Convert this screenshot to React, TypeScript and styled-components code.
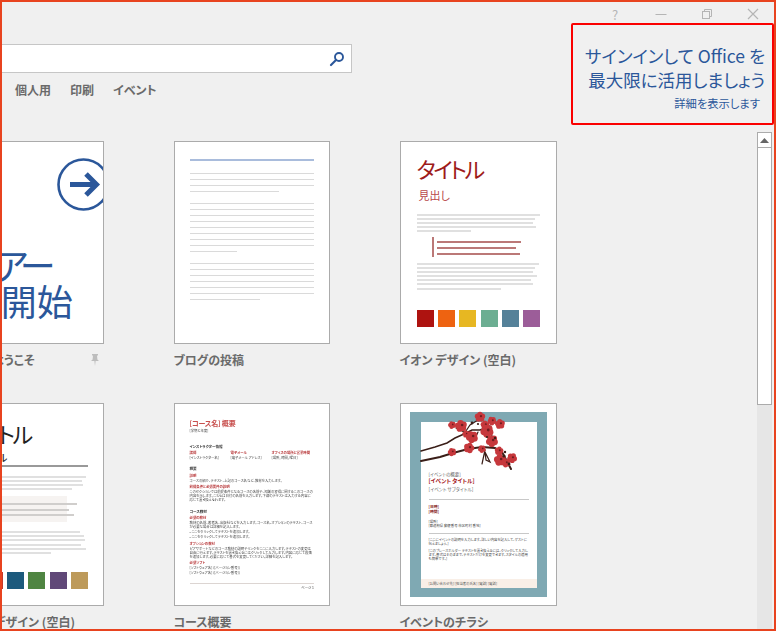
import styled, { createGlobalStyle } from "styled-components";

const UI_FONT = `"Noto Sans CJK JP", "Noto Sans", sans-serif`;
const BLUE = "#2b579a";

const GlobalStyle = createGlobalStyle`
  html, body {
    margin: 0;
    padding: 0;
    background: #f0f0f0;
    overflow: hidden;
  }
  * {
    box-sizing: border-box;
  }
`;

const body1 = [123, 118, 116, 119, 54];
const body2 = [122, 118, 116, 120, 114, 116, 84];
const quote = [84, 79, 83];
const facetTop = [121, 117, 118, 107];
const facetQuote = [90, 82, 87];
const facetBottom = [115, 119, 120, 116, 121, 86];
const ionColors = ["#ae1310", "#ee6311", "#e7b722", "#6cae92", "#558199", "#9c5d99"];
const facetColors = ["#8e2a2a", "#c5392a", "#1c5a7d", "#4f8542", "#604878", "#bd9a5a"];

function Lines({ widths, color, thick, gap }: { widths: number[]; color: string; thick: number; gap: number }) {
  return (
    <LineBlock $gap={gap}>
      {widths.map((w, i) => (
        <TextBar key={i} $w={w} $h={thick} $c={color} />
      ))}
    </LineBlock>
  );
}

function Swatches({ colors }: { colors: string[] }) {
  return (
    <SwatchRow>
      {colors.map((c) => (
        <Swatch key={c} $c={c} />
      ))}
    </SwatchRow>
  );
}

// each blossom is a ring of small petals round a dark centre
function Flower({ x, y, r }: { x: number; y: number; r: number }) {
  const petals = [0, 1, 2, 3, 4];
  return (
    <g>
      {petals.map((i) => {
        const a = (i * 2 * Math.PI) / 5 + x;
        return (
          <circle key={i} cx={x + Math.cos(a) * r * 0.65} cy={y + Math.sin(a) * r * 0.65} r={r * 0.68} fill="#c6383c" />
        );
      })}
      <circle cx={x + r * 0.25} cy={y - r * 0.2} r={r * 0.28} fill="#6d1d20" />
    </g>
  );
}

function Blossoms() {
  const flowers: [number, number, number][] = [
    [32, 15, 3], [41, 16, 4.6], [46, 24, 2.8], [52, 27, 4.6], [60, 7, 4], [65, 15, 3.4], [67, 21, 5], [72, 11, 3.4],
    [80, 14, 3.8], [72, 31, 4.6], [32, 42, 3.2], [49, 38, 4], [62, 39, 3], [79, 41, 3.4], [80, 50, 4.6],
    [92, 48, 3.8], [86, 53, 3.4],
  ];
  return (
    <BlossomArt viewBox="0 0 110 66" width="110" height="66">
      <g fill="none" stroke="#3a1e18" strokeLinecap="round">
        <path d="M1 41 L15 37 L27 33 L35 28 L44 24 L52 20 L60 20 L70 16" strokeWidth="1.5" />
        <path d="M44 24 L50 15 L58 10 M36 18 L44 22 M72 26 L70 20 M54 31 L58 22" strokeWidth="1.2" />
        <path d="M1 51 L20 47 L33 43 L48 39 L62 37 L75 38 L82 42 L91 59" strokeWidth="2" />
        <path d="M65 40 L62 54 M65 42 L70 52 L66 50 L65 42" strokeWidth="1.2" />
      </g>
      {flowers.map(([x, y, r]) => (
        <Flower key={`${x}-${y}`} x={x} y={y} r={r} />
      ))}
      <g fill="#3a1e18">
        <circle cx="52" cy="13" r="1.4" />
        <circle cx="58" cy="14" r="1.1" />
        <circle cx="75" cy="28" r="1.2" />
        <circle cx="84" cy="46" r="1.6" />
        <circle cx="89" cy="54" r="1.4" />
        <circle cx="67" cy="27" r="1.1" />
        <circle cx="85" cy="42" r="1.2" />
      </g>
    </BlossomArt>
  );
}

export default function App() {
  return (
    <>
      <GlobalStyle />
      <Page>
        <Header>
          <WindowControls>
            <ControlButton>
              <HelpGlyph>?</HelpGlyph>
            </ControlButton>
            <ControlButton>
              <svg width="12" height="12" viewBox="0 0 12 12">
                <path d="M0.5 6.5 H11.5" stroke="#b5b5b5" strokeWidth="1" />
              </svg>
            </ControlButton>
            <ControlButton>
              <svg width="12" height="12" viewBox="0 0 12 12" fill="none" stroke="#b5b5b5">
                <rect x="1.5" y="3.5" width="7" height="7" />
                <path d="M3.5 3.5 V1.5 H10.5 V8.5 H8.5" />
              </svg>
            </ControlButton>
            <ControlButton>
              <svg width="12" height="12" viewBox="0 0 12 12">
                <path d="M1 1 L11 11 M11 1 L1 11" stroke="#b5b5b5" strokeWidth="1.2" />
              </svg>
            </ControlButton>
          </WindowControls>
          <SearchBox>
            <svg width="16" height="16" viewBox="0 0 16 16" fill="none" stroke={BLUE}>
              <circle cx="10" cy="6" r="4" strokeWidth="1.9" />
              <path d="M7 9 L2 14" strokeWidth="2.2" strokeLinecap="round" />
            </svg>
          </SearchBox>
          <CategoryNav>
            <CategoryLink>個人用</CategoryLink>
            <CategoryLink>印刷</CategoryLink>
            <CategoryLink>イベント</CategoryLink>
          </CategoryNav>
        </Header>

        <Body>
          <Gallery>
            <TemplateGrid>
              <TemplateItem>
                <Thumb>
                  <TourArrow width="53" height="53" viewBox="0 0 53 53" fill="none" stroke={BLUE}>
                    <circle cx="26.5" cy="26.5" r="25" strokeWidth="2.6" />
                    <path d="M13 26.5 H38 M29 16 L39.5 26.5 L29 37" strokeWidth="5" />
                  </TourArrow>
                  <TourText>
                    <TourLine $tight>ツアー</TourLine>
                    <TourLine>を開始</TourLine>
                  </TourText>
                </Thumb>
                <LabelRow>
                  <Label>Word へようこそ</Label>
                  <svg width="10" height="12" viewBox="0 0 10 12" fill="#bdbdbd">
                    <path d="M2 0 H8 V1.5 H7 L7.4 5.5 L9 7 H5.6 L5 12 L4.4 7 H1 L2.6 5.5 L3 1.5 H2 Z" />
                  </svg>
                </LabelRow>
              </TemplateItem>

              <TemplateItem>
                <BlogThumb>
                  <TextBar $w={124} $h={2} $c="#a9bcdc" />
                  <BlogBody>
                    <Lines widths={[124, 124, 124, 89]} color="#dadada" thick={1} gap={5} />
                    <Lines widths={[124, 124, 124, 124, 124, 124, 124, 124, 47]} color="#dadada" thick={1} gap={5} />
                    <Lines widths={[124, 124, 124, 124, 124, 124, 70]} color="#dadada" thick={1} gap={5} />
                  </BlogBody>
                </BlogThumb>
                <LabelRow>
                  <Label>ブログの投稿</Label>
                </LabelRow>
              </TemplateItem>

              <TemplateItem>
                <DesignThumb>
                  <DesignTitle $c="#9e1b1b">タイトル</DesignTitle>
                  <DesignHeading>見出し</DesignHeading>
                  <Lines widths={body1} color="#e0e0e0" thick={2} gap={2} />
                  <PullQuote>
                    <Lines widths={quote} color="#bb7877" thick={2} gap={4} />
                  </PullQuote>
                  <Lines widths={body2} color="#e0e0e0" thick={2} gap={2.1} />
                  <Swatches colors={ionColors} />
                </DesignThumb>
                <LabelRow>
                  <Label>イオン デザイン (空白)</Label>
                </LabelRow>
              </TemplateItem>

              <TemplateItem>
                <FacetThumb>
                  <DesignTitle $c="#222222">タイトル</DesignTitle>
                  <FacetSubtitle>サブタイトル</FacetSubtitle>
                  <Lines widths={facetTop} color="#e0e0e0" thick={2} gap={2} />
                  <FacetCallout>
                    <Lines widths={facetQuote} color="#d0cecc" thick={2} gap={3.5} />
                  </FacetCallout>
                  <Lines widths={facetBottom} color="#e0e0e0" thick={2} gap={2.2} />
                  <Swatches colors={facetColors} />
                </FacetThumb>
                <LabelRow>
                  <Label>スライス デザイン (空白)</Label>
                </LabelRow>
              </TemplateItem>

              <TemplateItem>
                <CourseThumb>
                  <CourseSheet>
                    <CourseTitle>[コース名] 概要</CourseTitle>
                    <CourseTerm>[学期と年度]</CourseTerm>
                    <CourseSection $mt={10.5}>インストラクター情報</CourseSection>
                    <InfoColumns>
                      <div>
                        <RedTiny>講師</RedTiny>
                        <CoursePara>[インストラクター名]</CoursePara>
                      </div>
                      <div>
                        <RedTiny>電子メール</RedTiny>
                        <CoursePara>[電子メール アドレス]</CoursePara>
                      </div>
                      <div>
                        <RedTiny>オフィスの場所と営業時間</RedTiny>
                        <CoursePara>[場所, 時間, 曜日]</CoursePara>
                      </div>
                    </InfoColumns>
                    <CourseSection $mt={6.5}>概要</CourseSection>
                    <RedTiny>説明</RedTiny>
                    <CoursePara>コースの紹介、テキスト、上記のコース名など、教材を入力します。</CoursePara>
                    <RedTiny>前提条件と必須要件の説明</RedTiny>
                    <CoursePara>
                      このセクションでは前提条件となるコースの名前や、知識の習得に関するこのコースの内容を示します。こちらは日付の名前を入力します。下線のテキストは入力する内容に応じて置き換えられます。
                    </CoursePara>
                    <CourseSection $mt={6.5}>コース教材</CourseSection>
                    <RedTiny>必須の教材</RedTiny>
                    <CoursePara>教材の名前、著者名、出版社などを入力します。コース名、オプションのテキスト、コースが必要な場合は詳細を記入します。</CoursePara>
                    <CoursePara>• ここをクリックしてテキストを追加します。</CoursePara>
                    <CoursePara>• ここをクリックしてテキストを追加します。</CoursePara>
                    <RedTiny>オプションの教材</RedTiny>
                    <CoursePara>
                      ピアサポートなどのコース教材の説明やリンクをここに入力します。テキストの変更は自由に行えます。テキストを置き換えるにはクリックして入力します。内容に応じて段落を追加します。必要に応じて書式を変更してください。詳細を記入します。
                    </CoursePara>
                    <RedTiny>必須ソフト</RedTiny>
                    <CoursePara>[ソフトウェア名] ([バージョン番号])</CoursePara>
                    <CoursePara>[ソフトウェア名] ([バージョン番号])</CoursePara>
                    <CourseFooter>ページ 1</CourseFooter>
                  </CourseSheet>
                </CourseThumb>
                <LabelRow>
                  <Label>コース概要</Label>
                </LabelRow>
              </TemplateItem>

              <TemplateItem>
                <FlyerThumb>
                  <FlyerFrame>
                    <FlyerSheet>
                      <Blossoms />
                      <FlyerContent>
                        <FlyerSmall>[イベントの概要]</FlyerSmall>
                        <FlyerTitle>[イベント タイトル]</FlyerTitle>
                        <FlyerSub>[イベント サブタイトル]</FlyerSub>
                        <FlyerRule />
                        <FlyerDate>[日時]</FlyerDate>
                        <FlyerDate>[時間]</FlyerDate>
                        <FlyerPlace>[場所]</FlyerPlace>
                        <Tiny>[都道府県 郵便番号 市区町村 番地]</Tiny>
                        <FlyerRule />
                        <FlyerPara>[ここにイベントの説明を入力します。詳しい内容を記入して、ゲストに伝えましょう。]</FlyerPara>
                        <FlyerPara>
                          [このプレースホルダー テキストを置き換えるには、クリックして入力します。書式はそのままで、テキストだけを変更できます。スタイルの適用も簡単です。]
                        </FlyerPara>
                      </FlyerContent>
                      <FlyerFooter>[お問い合わせ先] [担当者の氏名] [電話] [電話]</FlyerFooter>
                    </FlyerSheet>
                  </FlyerFrame>
                </FlyerThumb>
                <LabelRow>
                  <Label>イベントのチラシ</Label>
                </LabelRow>
              </TemplateItem>
            </TemplateGrid>
          </Gallery>

          <ScrollBar>
            <ScrollArrow>
              <svg width="9" height="5" viewBox="0 0 9 5" fill="#666">
                <path d="M4.5 0 L9 5 H0 Z" />
              </svg>
            </ScrollArrow>
            <ScrollThumb />
          </ScrollBar>
        </Body>

        <SignInCallout>
          <SignInLine>サインインして Office を</SignInLine>
          <SignInLine>最大限に活用しましょう</SignInLine>
          <SignInMore>詳細を表示します</SignInMore>
        </SignInCallout>
      </Page>
    </>
  );
}

const Page = styled.div`
  position: relative;
  width: 776px;
  height: 631px;
  border: 2px solid #e8431f;
  background: #f0f0f0;
  display: flex;
  flex-direction: column;
  overflow: hidden;
  font-family: ${UI_FONT};
  font-feature-settings: "palt";
`;

const Header = styled.header`
  height: 130px;
  flex-shrink: 0;
`;

const WindowControls = styled.div`
  display: flex;
  justify-content: flex-end;
  height: 24px;
  margin-right: -2px;
`;

const ControlButton = styled.div`
  width: 46px;
  display: flex;
  align-items: center;
  justify-content: center;
`;

const HelpGlyph = styled.span`
  color: #b5b5b5;
  font-size: 13px;
  line-height: 1;
`;

const SearchBox = styled.div`
  width: 350px;
  height: 29px;
  margin-top: 18px;
  background: #fff;
  border: 1px solid #c6c6c6;
  border-left: none;
  display: flex;
  align-items: center;
  justify-content: flex-end;
  padding-right: 6px;
`;

const CategoryNav = styled.nav`
  display: flex;
  gap: 19px;
  margin-top: 8px;
  padding-left: 13px;
`;

const CategoryLink = styled.span`
  font-size: 12px;
  line-height: 18px;
  font-weight: 700;
  color: #6a6a6a;
`;

const Body = styled.div`
  flex: 1;
  min-height: 0;
  display: flex;
`;

const Gallery = styled.main`
  flex: 1;
  min-width: 0;
  overflow: hidden;
  padding-top: 9px;
`;

const TemplateGrid = styled.div`
  display: grid;
  grid-template-columns: 156.5px 156.5px 157px;
  column-gap: 69.5px;
  row-gap: 27px;
  margin-left: -54.5px;
`;

const TemplateItem = styled.div`
  display: flex;
  flex-direction: column;
`;

const Thumb = styled.div`
  height: 203px;
  background: #fff;
  border: 1px solid #ababab;
  display: flex;
  flex-direction: column;
  overflow: hidden;
`;

const LabelRow = styled.div`
  height: 32px;
  display: flex;
  align-items: center;
  justify-content: space-between;
  padding-right: 4px;
`;

const Label = styled.span`
  font-size: 12px;
  font-weight: 700;
  line-height: 18px;
  color: #6a6a6a;
  white-space: nowrap;
`;

const TourArrow = styled.svg`
  flex-shrink: 0;
  align-self: flex-end;
  margin: 16px -7px 0 0;
`;

const TourText = styled.div`
  margin: 35px 0 0 19px;
  font-size: 36px;
  line-height: 36px;
  color: ${BLUE};
  white-space: nowrap;
`;

const TourLine = styled.div<{ $tight?: boolean }>`
  letter-spacing: ${(p) => (p.$tight ? "-6px" : "0")};
`;

const BlogThumb = styled(Thumb)`
  padding: 17px 15px 0;
`;

const BlogBody = styled.div`
  display: flex;
  flex-direction: column;
  gap: 11px;
  margin-top: 12px;
`;

const LineBlock = styled.div<{ $gap: number }>`
  display: flex;
  flex-direction: column;
  gap: ${(p) => p.$gap}px;
`;

const TextBar = styled.div<{ $w: number; $h: number; $c: string }>`
  width: ${(p) => p.$w}px;
  height: ${(p) => p.$h}px;
  background: ${(p) => p.$c};
  flex-shrink: 0;
`;

const DesignThumb = styled(Thumb)`
  padding: 11px 15px 0 16px;
`;

const DesignTitle = styled.div<{ $c: string }>`
  font-size: 22px;
  letter-spacing: -2.5px;
  line-height: 30px;
  color: ${(p) => p.$c};
  white-space: nowrap;
`;

const DesignHeading = styled.div`
  font-size: 11px;
  line-height: 16px;
  margin: 4px 0 11px 2px;
  color: #b8474a;
`;

const PullQuote = styled.div`
  margin: 5px 0 6px 15px;
  padding: 4px 0 2px 3px;
  border-left: 2px solid #bb7877;
`;

const SwatchRow = styled.div`
  display: flex;
  gap: 4.4px;
  margin-top: auto;
  margin-bottom: 16px;
`;

const Swatch = styled.div<{ $c: string }>`
  width: 17px;
  height: 17px;
  background: ${(p) => p.$c};
`;

const FacetThumb = styled(DesignThumb)`
  padding-top: 14px;
`;

const FacetSubtitle = styled.div`
  font-size: 10px;
  letter-spacing: -2px;
  line-height: 13px;
  font-weight: 500;
  color: #222;
  margin: 2.5px 0 9px;
  padding-bottom: 1.5px;
  border-bottom: 2px solid #999;
`;

const FacetCallout = styled.div`
  margin: 6px 21px 9px 0;
  height: 26px;
  padding: 7px 0 0 22px;
  background: #f6f3f1;
`;

const Tiny = styled.div`
  font-size: 3.4px;
  line-height: 4px;
  color: #444;
`;

const RedTiny = styled(Tiny)`
  color: #b8383a;
  font-weight: 700;
  margin-top: 2.2px;
`;

const CourseThumb = styled(Thumb)`
  padding: 14px 15px 0;
`;

const CourseSheet = styled.div`
  flex: 1;
  min-height: 0;
  display: flex;
  flex-direction: column;
  filter: blur(0.4px);
`;

const CourseTitle = styled.div`
  font-size: 7px;
  letter-spacing: -0.2px;
  line-height: 10px;
  font-weight: 700;
  color: #c8504e;
`;

const CourseTerm = styled(Tiny)`
  margin-top: 1px;
`;

const CourseSection = styled.div<{ $mt: number }>`
  margin-top: ${(p) => p.$mt}px;
  font-size: 3.6px;
  line-height: 5px;
  font-weight: 700;
  color: #333;
`;

const CoursePara = styled(Tiny)`
  margin-top: 1.2px;
`;

const InfoColumns = styled.div`
  display: grid;
  grid-template-columns: 41px 41px 1fr;
`;

const CourseFooter = styled(Tiny)`
  margin-top: auto;
  margin-bottom: 15px;
  padding-top: 2px;
  border-top: 1px solid #dcd5d2;
  text-align: right;
`;

const FlyerThumb = styled(Thumb)`
  padding: 8px 9px 8px;
`;

const FlyerFrame = styled.div`
  flex: 1;
  background: #7fa9b3;
  padding: 10px 10px 9px 11px;
  display: flex;
`;

const FlyerSheet = styled.div`
  position: relative;
  flex: 1;
  background: #fff;
  display: flex;
  flex-direction: column;
`;

const BlossomArt = styled.svg`
  position: absolute;
  left: -1px;
  top: -12px;
  filter: blur(0.25px);
`;

const FlyerContent = styled.div`
  flex: 1;
  padding: 49px 8px 0;
`;

const FlyerSmall = styled.div`
  font-size: 4.5px;
  line-height: 6px;
  color: #666;
`;

const FlyerTitle = styled.div`
  font-size: 5.6px;
  line-height: 8px;
  font-weight: 700;
  color: #a5181c;
`;

const FlyerSub = styled.div`
  font-size: 4.6px;
  line-height: 9px;
  color: #666;
`;

const FlyerRule = styled.div`
  height: 1px;
  background: #c8c8c8;
  margin: 5px 0 4px;
`;

const FlyerDate = styled.div`
  font-size: 3.8px;
  line-height: 5.4px;
  font-weight: 700;
  color: #8c2a2a;
`;

const FlyerPlace = styled(Tiny)`
  margin-top: 5px;
`;

const FlyerPara = styled(Tiny)`
  margin-bottom: 3px;
`;

const FlyerFooter = styled.div`
  height: 9px;
  background: #f9efe7;
  padding-left: 8px;
  font-size: 3.4px;
  line-height: 9px;
  color: #555;
`;

const ScrollBar = styled.aside`
  width: 15px;
  margin-right: 2px;
  background: #e6e6e6;
  flex-shrink: 0;
`;

const ScrollArrow = styled.div`
  height: 16px;
  background: #fff;
  border: 1px solid #ababab;
  display: flex;
  align-items: center;
  justify-content: center;
`;

const ScrollThumb = styled.div`
  height: 258px;
  margin-top: -1px;
  background: #fff;
  border: 1px solid #ababab;
`;

const SignInCallout = styled.aside`
  position: absolute;
  top: 21px;
  right: 0;
  width: 203px;
  height: 102px;
  border: 2px solid #fa0000;
  border-radius: 2px;
  padding: 19px 7px 0 0;
  text-align: right;
  color: ${BLUE};
`;

const SignInLine = styled.div`
  font-size: 17.5px;
  line-height: 24px;
  font-weight: 400;
  white-space: nowrap;
`;

const SignInMore = styled.div`
  margin: 2px 5px 0 0;
  font-size: 11.3px;
  line-height: 18px;
  white-space: nowrap;
`;
